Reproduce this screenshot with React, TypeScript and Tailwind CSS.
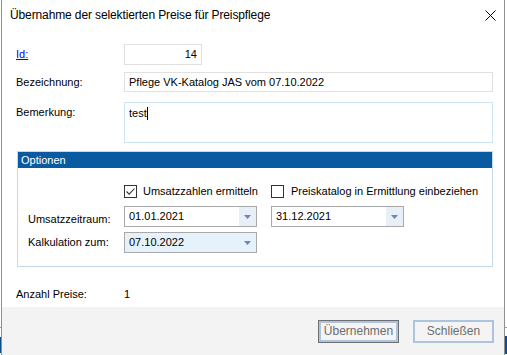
import React from "react";

function Combo({ value, highlighted }: { value: string; highlighted?: boolean }) {
  return (
    <div
      className={`w-[133px] h-[21px] border border-[#a9a9a9] flex items-center ${
        highlighted ? "bg-[#e5f1fb]" : "bg-white"
      }`}
    >
      <span className="flex-1 pl-[4px]">{value}</span>
      <div className={`w-[17px] h-full flex items-center justify-center ${highlighted ? "" : "bg-[#e8eff7]"}`}>
        <svg width="7" height="4" viewBox="0 0 7 4">
          <polygon points="0,0 7,0 3.5,4" fill="#6c88ad" />
        </svg>
      </div>
    </div>
  );
}

function Checkbox({ checked }: { checked?: boolean }) {
  return (
    <div className="w-[13px] h-[13px] border border-[#333] bg-white flex items-center justify-center">
      {checked && (
        <svg width="11" height="11" viewBox="0 0 11 11">
          <polyline points="1.5,5.5 4.2,8.2 9.5,2.5" fill="none" stroke="#333" strokeWidth="1.1" />
        </svg>
      )}
    </div>
  );
}

export default function App() {
  return (
    <div
      className="w-[507px] h-[355px] bg-white overflow-hidden flex text-black text-[11px] leading-[13px]"
      style={{ fontFamily: '"Liberation Sans", Arial, sans-serif' }}
    >
      {/* left edge of desktop behind */}
      <div className="w-[1px] h-full flex flex-col">
        <div className="h-[327px] bg-white" />
        <div className="h-[1px] bg-[#9a9a9a]" />
        <div className="h-[9px] bg-white" />
        <div className="h-[16px] bg-[#0b4f8f]" />
        <div className="flex-1 bg-white" />
      </div>

      {/* window */}
      <div className="w-[504px] h-full border-x border-[#8f8f8f] flex flex-col bg-white">
        {/* title bar */}
        <div className="h-[30px] flex items-center justify-between pl-[8px] pr-[8px] shrink-0">
          <span className="text-[12px] leading-[16px] tracking-[-0.12px] text-black">
            Übernahme der selektierten Preise für Preispflege
          </span>
          <svg width="11" height="11" viewBox="0 0 11 11" className="mt-[1px]">
            <line x1="0.5" y1="0.5" x2="10.5" y2="10.5" stroke="#000" strokeWidth="1" />
            <line x1="10.5" y1="0.5" x2="0.5" y2="10.5" stroke="#000" strokeWidth="1" />
          </svg>
        </div>

        {/* body */}
        <div className="flex-1 flex flex-col pl-[14px]">
          <div className="mt-[14px] flex items-center">
            <span className="w-[108px] text-[#0000ff] underline">Id:</span>
            <div className="w-[78px] h-[21px] border border-[#e0e0e0] flex items-center justify-end pr-[4px]">
              14
            </div>
          </div>
          <div className="mt-[7px] flex items-center">
            <span className="w-[108px]">Bezeichnung:</span>
            <div className="w-[369px] h-[20px] border border-[#e0e0e0] flex items-center pl-[4px]">
              Pflege VK-Katalog JAS vom 07.10.2022
            </div>
          </div>
          <div className="mt-[10px] flex items-start">
            <span className="w-[108px] pt-[4px]">Bemerkung:</span>
            <div className="w-[369px] h-[41px] border border-[#cce4f7] flex items-start pl-[4px] pt-[4px]">
              <span>test</span>
              <span className="w-[1px] h-[13px] bg-black" />
            </div>
          </div>

          {/* Optionen group */}
          <div className="mt-[8px] ml-[1px] w-[476px] h-[116px] border border-[#c5d7ea] flex flex-col">
            <div className="h-[16px] bg-[#0a5aa1] text-white flex items-center pl-[3px]">Optionen</div>
            <div className="flex flex-col pl-[10px]">
              <div className="mt-[17px] flex items-center pl-[96px]">
                <div className="w-[147px] flex items-center gap-[6px]">
                  <Checkbox checked />
                  <span>Umsatzzahlen ermitteln</span>
                </div>
                <div className="flex items-center gap-[7px]">
                  <Checkbox />
                  <span>Preiskatalog in Ermittlung einbeziehen</span>
                </div>
              </div>
              <div className="mt-[8px] flex items-end">
                <span className="w-[96px] pb-[1px]">Umsatzzeitraum:</span>
                <Combo value="01.01.2021" />
                <div className="ml-[14px]">
                  <Combo value="31.12.2021" />
                </div>
              </div>
              <div className="mt-[5px] flex items-center">
                <span className="w-[96px]">Kalkulation zum:</span>
                <Combo value="07.10.2022" highlighted />
              </div>
            </div>
          </div>

          <div className="mt-[21px] flex items-center">
            <span className="w-[108px]">Anzahl Preise:</span>
            <span>1</span>
          </div>
        </div>

        {/* footer */}
        <div className="h-[48px] bg-[#f3f3f3] shrink-0 flex items-start justify-end pr-[10px] pt-[13px] gap-[14px]">
          <div className="w-[81px] h-[23px] border border-[#6f6f6f] flex">
            <div className="flex-1 border-2 border-[#aec3e0] bg-[#f4f4f4] flex items-center justify-center text-[#6d6d6d] text-[12px]">
              Übernehmen
            </div>
          </div>
          <div className="w-[81px] h-[23px] border-2 border-[#aec3e0] bg-[#f4f4f4] flex items-center justify-center text-[#6d6d6d] text-[12px]">
            Schließen
          </div>
        </div>
      </div>

      {/* right edge of desktop behind */}
      <div className="flex-1 h-full flex flex-col">
        <div className="h-[327px] bg-white" />
        <div className="h-[1px] bg-[#9a9a9a]" />
        <div className="h-[8px] bg-white" />
        <div className="h-[18px] bg-[#0b4f8f]" />
        <div className="flex-1 bg-white" />
      </div>
    </div>
  );
}
